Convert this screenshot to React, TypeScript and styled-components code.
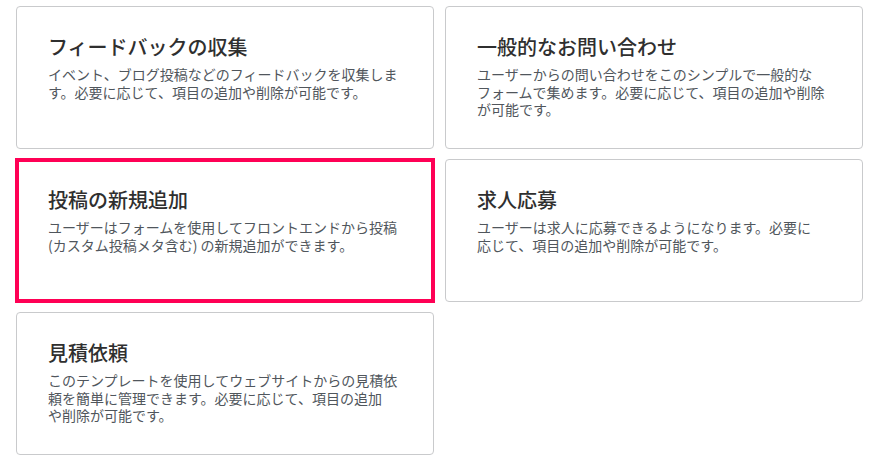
import React from 'react';
import styled, { createGlobalStyle } from 'styled-components';

const GlobalStyle = createGlobalStyle`
    html, body {
        margin: 0;
        padding: 0;
        background: #ffffff;
    }
    body {
        font-family: "Noto Sans CJK JP", "Noto Sans", sans-serif;
    }
`;

const accent = '#ff0055';

const TemplateGrid = styled.div`
    display: grid;
    grid-template-columns: 418px 418px;
    grid-auto-rows: 143px;
    column-gap: 11px;
    row-gap: 10px;
    padding: 6px 14px 6px 16px;
`;

const TemplateCard = styled.div<{ $selected?: boolean }>`
    box-sizing: border-box;
    display: flex;
    flex-direction: column;
    padding: 26px 31px;
    background: #ffffff;
    border: 1px solid ${(p) => (p.$selected ? accent : '#c9cacc')};
    border-radius: ${(p) => (p.$selected ? '0' : '4px')};
    box-shadow: ${(p) => (p.$selected ? `0 0 0 1px ${accent}, inset 0 0 0 2px ${accent}` : 'none')};
    cursor: pointer;
`;

const CardTitle = styled.h3`
    margin: 0 0 5px;
    font-size: 20px;
    line-height: 28px;
    font-weight: 500;
    color: #2f2f2f;
`;

const CardText = styled.p`
    margin: 0;
    font-size: 14px;
    line-height: 17.5px;
    color: #50565c;
`;

type Template = {
    title: string;
    lines: string[];
    selected?: boolean;
};

const templates: Template[] = [
    {
        title: 'フィードバックの収集',
        lines: ['イベント、ブログ投稿などのフィードバックを収集しま', 'す。必要に応じて、項目の追加や削除が可能です。'],
    },
    {
        title: '一般的なお問い合わせ',
        lines: [
            'ユーザーからの問い合わせをこのシンプルで一般的な',
            'フォームで集めます。必要に応じて、項目の追加や削除',
            'が可能です。',
        ],
    },
    {
        title: '投稿の新規追加',
        lines: ['ユーザーはフォームを使用してフロントエンドから投稿', '(カスタム投稿メタ含む) の新規追加ができます。'],
        selected: true,
    },
    {
        title: '求人応募',
        lines: ['ユーザーは求人に応募できるようになります。必要に', '応じて、項目の追加や削除が可能です。'],
    },
    {
        title: '見積依頼',
        lines: [
            'このテンプレートを使用してウェブサイトからの見積依',
            '頼を簡単に管理できます。必要に応じて、項目の追加',
            'や削除が可能です。',
        ],
    },
];

export default function App() {
    return (
        <>
            <GlobalStyle />
            <TemplateGrid>
                {templates.map((t) => (
                    <TemplateCard key={t.title} $selected={t.selected}>
                        <CardTitle>{t.title}</CardTitle>
                        <CardText>
                            {t.lines.map((line, i) => (
                                <React.Fragment key={i}>
                                    {i > 0 && <br />}
                                    {line}
                                </React.Fragment>
                            ))}
                        </CardText>
                    </TemplateCard>
                ))}
            </TemplateGrid>
        </>
    );
}
